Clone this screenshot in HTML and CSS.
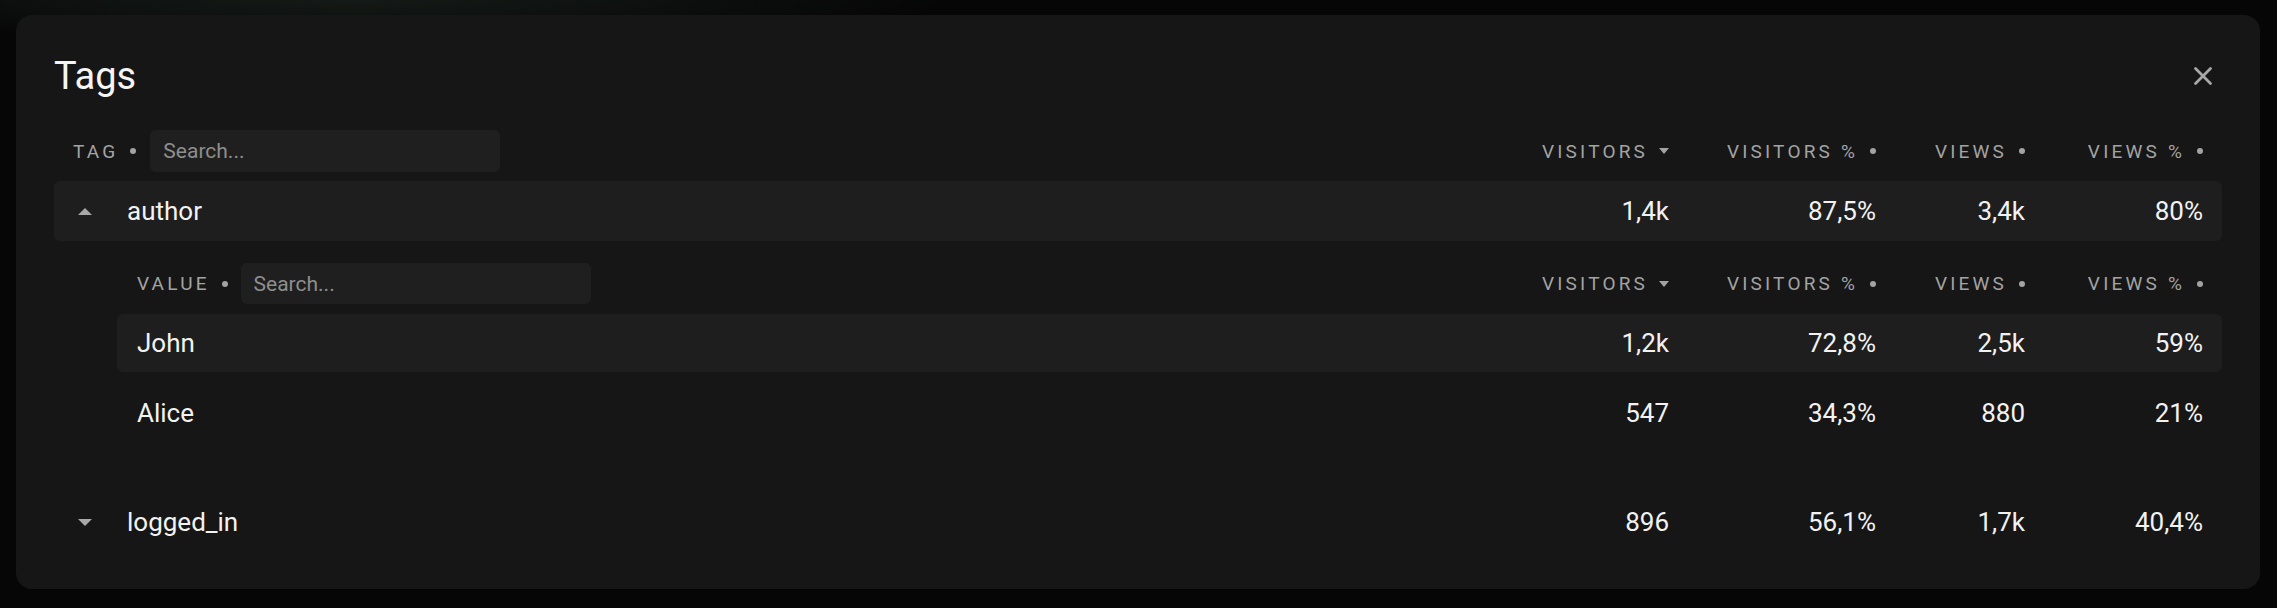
FILE: index.html
```html
<!DOCTYPE html>
<html lang="en">
<head>
<meta charset="utf-8">
<title>Tags</title>
<link rel="stylesheet" href="styles.css">
</head>
<body>
<div class="backdrop">
  <section class="panel">
    <header class="panel-head">
      <h1 class="title">Tags</h1>
      <button class="close" aria-label="Close">
        <svg viewBox="0 0 20 20" width="20" height="20"><path d="M2.5 2.5 L17.5 17.5 M17.5 2.5 L2.5 17.5" stroke="#a8a8a8" stroke-width="2.8" stroke-linecap="round" fill="none"/></svg>
      </button>
    </header>

    <div class="grid head-row">
      <div class="first">
        <span class="col-label lead">TAG <span class="dot"></span></span>
        <div class="search">Search...</div>
      </div>
      <div class="col-label num">VISITORS <span class="caret"></span></div>
      <div class="col-label num">VISITORS % <span class="dot"></span></div>
      <div class="col-label num">VIEWS <span class="dot"></span></div>
      <div class="col-label num">VIEWS % <span class="dot"></span></div>
    </div>

    <div class="grid tag-row filled">
      <div class="first"><span class="tri up"></span><span class="name">author</span></div>
      <div class="num">1,4k</div>
      <div class="num">87,5%</div>
      <div class="num">3,4k</div>
      <div class="num">80%</div>
    </div>

    <div class="sub">
      <div class="grid head-row sub-head">
        <div class="first">
          <span class="col-label lead">VALUE <span class="dot"></span></span>
          <div class="search">Search...</div>
        </div>
        <div class="col-label num">VISITORS <span class="caret"></span></div>
        <div class="col-label num">VISITORS % <span class="dot"></span></div>
        <div class="col-label num">VIEWS <span class="dot"></span></div>
        <div class="col-label num">VIEWS % <span class="dot"></span></div>
      </div>
      <div class="grid val-row filled">
        <div class="first"><span class="name">John</span></div>
        <div class="num">1,2k</div>
        <div class="num">72,8%</div>
        <div class="num">2,5k</div>
        <div class="num">59%</div>
      </div>
      <div class="grid val-row">
        <div class="first"><span class="name">Alice</span></div>
        <div class="num">547</div>
        <div class="num">34,3%</div>
        <div class="num">880</div>
        <div class="num">21%</div>
      </div>
    </div>

    <div class="grid tag-row">
      <div class="first"><span class="tri down"></span><span class="name">logged_in</span></div>
      <div class="num">896</div>
      <div class="num">56,1%</div>
      <div class="num">1,7k</div>
      <div class="num">40,4%</div>
    </div>
  </section>
</div>
</body>
</html>
```
FILE: styles.css
```css
* { box-sizing: border-box; }
html, body {
  margin: 0;
  padding: 0;
  background: #060606;
  font-family: Roboto, "Liberation Sans", sans-serif;
  color: #f2f2f2;
}
.backdrop {
  width: 2277px;
  height: 608px;
  padding: 15px 17px 19px 16px;
  background: radial-gradient(ellipse 600px 40px at 350px 0px, rgba(30,40,35,0.6), transparent),
              #060606;
}
.panel {
  height: 574px;
  background: #161616;
  border-radius: 16px;
  padding: 38px 38px 37px 38px;
  display: flex;
  flex-direction: column;
}
.panel-head {
  display: flex;
  align-items: center;
  justify-content: space-between;
  height: 46px;
}
.title {
  margin: 0;
  font-size: 38px;
  font-weight: 400;
  line-height: 46px;
  color: #f5f5f5;
}
.close {
  background: none;
  border: 0;
  padding: 0;
  width: 20px;
  height: 20px;
  margin-right: 9px;
  display: flex;
}
.grid {
  display: grid;
  grid-template-columns: 1fr 150px 207px 149px 178px;
  align-items: center;
  padding: 0 19px;
}
.first {
  display: flex;
  align-items: center;
  min-width: 0;
}
.num {
  text-align: right;
  justify-self: end;
  display: flex;
  align-items: center;
}
.head-row {
  height: 42px;
  margin-top: 31px;
}
.col-label {
  font-size: 19px;
  letter-spacing: 3.2px;
  color: #a3a3a3;
  display: inline-flex;
  align-items: center;
  white-space: pre;
}
.dot {
  display: inline-block;
  width: 6px;
  height: 6px;
  border-radius: 50%;
  background: #a3a3a3;
  margin-left: 4px;
}
.caret {
  display: inline-block;
  width: 0;
  height: 0;
  border-left: 5px solid transparent;
  border-right: 5px solid transparent;
  border-top: 6px solid #a3a3a3;
  margin-left: 3px;
}
.search {
  width: 350px;
  height: 42px;
  margin-left: 14px;
  background: #1f1f1f;
  border-radius: 6px;
  padding-left: 13px;
  display: flex;
  align-items: center;
  font-size: 21px;
  color: #8e8e8e;
}
.tag-row {
  height: 60px;
  font-size: 26px;
  border-radius: 6px;
}
.head-row + .tag-row { margin-top: 9px; }
.filled { background: #1e1e1e; }
.tri {
  width: 0;
  height: 0;
  border-left: 7px solid transparent;
  border-right: 7px solid transparent;
  margin-left: 5px;
  margin-right: 35px;
}
.tri.up { border-bottom: 7px solid #a8a8a8; }
.tri.down { border-top: 7px solid #a8a8a8; }
.sub {
  margin-left: 63px;
  padding-bottom: 50px;
}
.sub .grid { padding-left: 20px; }
.sub-head { margin-top: 22px; height: 41px; }
.sub-head .search { height: 41px; margin-left: 13px; }
.val-row {
  height: 58px;
  font-size: 26px;
  border-radius: 6px;
}
.sub-head + .val-row { margin-top: 10px; }
.val-row + .val-row { margin-top: 12px; }
```
